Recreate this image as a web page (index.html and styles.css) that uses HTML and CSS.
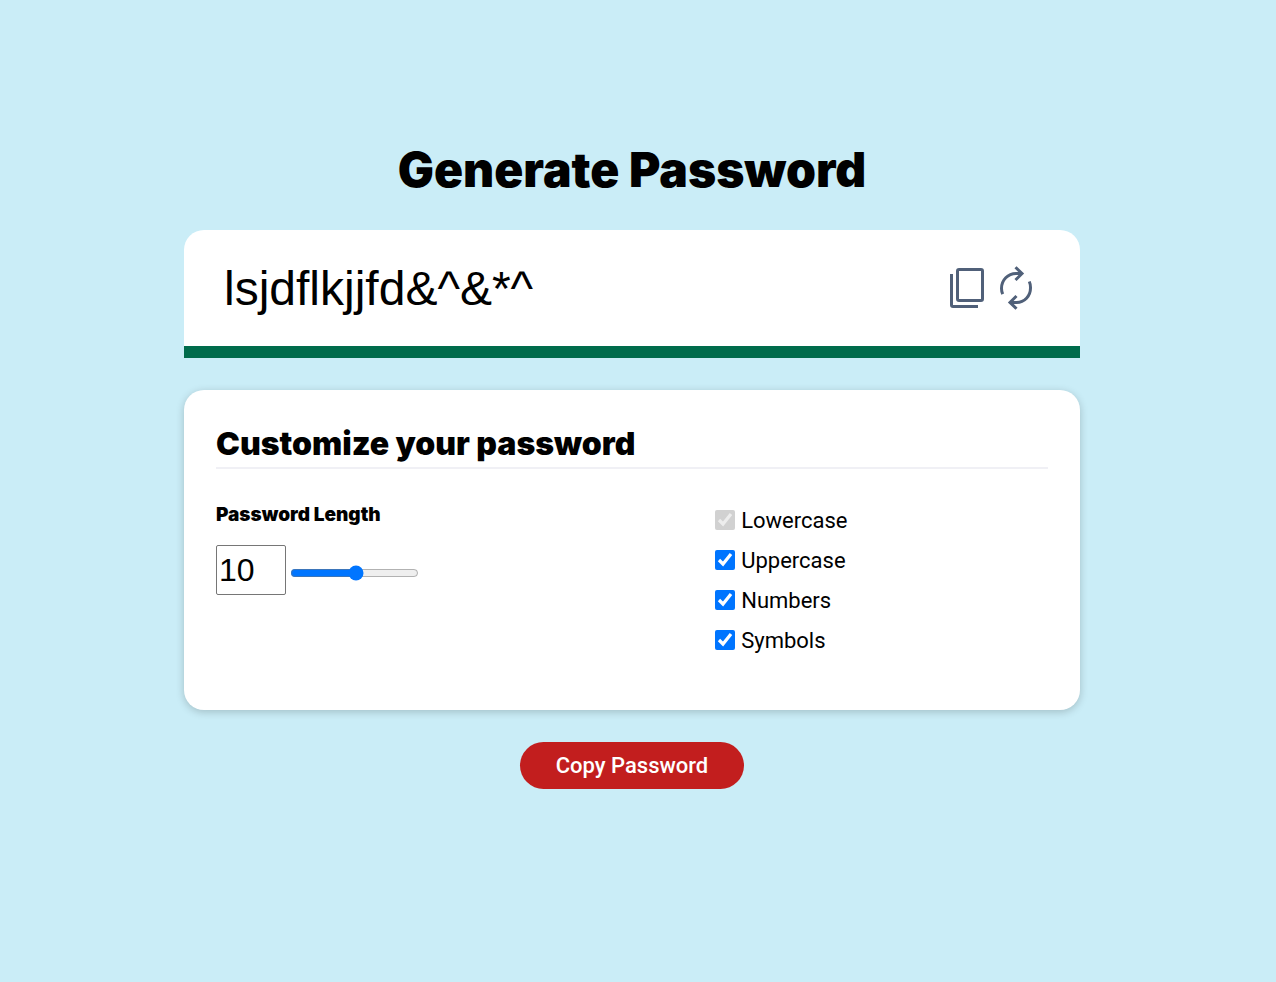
FILE: index.html
```html
<!DOCTYPE html>
<html lang="en">
<head>
<meta charset="utf-8">
<meta name="viewport" content="width=device-width, initial-scale=1">
<title>Generate Password</title>
<link rel="stylesheet" href="styles.css">
</head>
<body>
<main class="page">
  <h1 class="title">Generate Password</h1>

  <section class="result">
    <input class="result-text" type="text" value="lsjdflkjjfd&amp;^&amp;*^" aria-label="Generated password" readonly>
    <div class="actions">
      <button class="icon-button" type="button" aria-label="Copy">
        <svg class="icon" viewBox="0 0 48 48" aria-hidden="true">
          <rect x="13.5" y="5.5" width="25" height="31" rx="1.5"/>
          <path d="M7.500 10V41Q7.500 42.500 9 42.500H34"/>
        </svg>
      </button>
      <button class="icon-button" type="button" aria-label="Regenerate">
        <svg class="icon" viewBox="0 0 48 48" aria-hidden="true">
          <path d="M10.700 30.200A14.500 14.500 0 0 1 9.500 24.500C9.500 16 16 9.500 24 9.500H29"/>
          <path d="M23.500 3.200L30 9.600L23.500 16"/>
          <path d="M37.300 17.500A15 15 0 0 1 38.500 24C38.500 32 32.500 38.500 24.500 38.500H18"/>
          <path d="M24.500 32L18 38.400L24.500 44.800"/>
        </svg>
      </button>
    </div>
  </section>

  <section class="card">
    <h2 class="card-title">Customize your password</h2>
    <div class="settings">
      <div class="length">
        <label class="length-label" for="length">Password Length</label>
        <div class="length-controls">
          <input class="length-number" id="length" type="text" inputmode="numeric" value="10">
          <input class="length-range" type="range" min="0" max="100" value="51" aria-label="Password length slider">
        </div>
      </div>
      <div class="options">
        <label class="option"><input class="check" type="checkbox" checked disabled>Lowercase</label>
        <label class="option"><input class="check" type="checkbox" checked>Uppercase</label>
        <label class="option"><input class="check" type="checkbox" checked>Numbers</label>
        <label class="option"><input class="check" type="checkbox" checked>Symbols</label>
      </div>
    </div>
  </section>

  <button class="copy" type="button">Copy Password</button>
</main>
</body>
</html>
```

FILE: styles.css
```css
* {
  box-sizing: border-box;
}

body {
  margin: 0;
  min-height: 100vh;
  padding: 140px 28px 32px 16px;
  background: #caedf7;
  color: #000;
  font-family: Roboto, "Noto Sans", sans-serif;
}

.page {
  display: flex;
  flex-direction: column;
  align-items: center;
  gap: 32px;
  max-width: 896px;
  margin: 0 auto;
}

.title {
  margin: 0;
  padding-top: 2px;
  font-family: Inter, sans-serif;
  font-size: 48px;
  line-height: 56px;
  font-weight: 900;
  text-align: center;
}

.result {
  display: flex;
  align-items: center;
  justify-content: space-between;
  width: 100%;
  min-height: 128px;
  padding: 0 40px;
  background: #fff;
  border-bottom: 12px solid #006c4c;
  border-radius: 20px 20px 0 0;
}

.result-text {
  flex: 1;
  min-width: 0;
  padding: 0;
  border: 0;
  outline: 0;
  background: transparent;
  color: #000;
  font: 48px "Liberation Sans", Arial, sans-serif;
}

.actions {
  display: flex;
}

.icon-button {
  display: flex;
  padding: 0;
  border: 0;
  background: none;
  cursor: pointer;
}

.icon {
  width: 48px;
  height: 48px;
  fill: none;
  stroke: #506079;
  stroke-width: 3;
}

.card {
  width: 100%;
  min-height: 320px;
  padding: 32px;
  background: #fff;
  border-radius: 20px;
  box-shadow: 0 2px 8px rgba(0, 0, 0, 0.2);
}

.card-title {
  margin: 0;
  padding-top: 1px;
  padding-bottom: 2px;
  border-bottom: 2px solid #f0f0f5;
  font-family: Inter, sans-serif;
  font-size: 32px;
  line-height: 42px;
  font-weight: 900;
}

.settings {
  display: grid;
  grid-template-columns: 3fr 2fr;
  padding-top: 32px;
}

.length-label {
  display: block;
  padding-top: 1px;
  font-family: Inter, sans-serif;
  font-size: 19px;
  line-height: 26px;
  font-weight: 900;
}

.length-controls {
  display: flex;
  align-items: center;
  gap: 4px;
  padding-top: 17px;
}

.length-number {
  width: 70px;
  height: 50px;
  padding: 1px 2px;
  border: 1px solid #767676;
  border-radius: 2px;
  font: 32px "Liberation Sans", Arial, sans-serif;
}

.length-range {
  width: 129px;
  margin: 6px 0 0;
}

.options {
  display: flex;
  flex-direction: column;
}

.option {
  display: flex;
  align-items: center;
  gap: 6px;
  font-size: 22px;
  line-height: 40px;
}

.check {
  width: 20px;
  height: 20px;
  margin: 0 0 2px;
}

.copy {
  width: 224px;
  height: 47px;
  padding: 0;
  border: 0;
  border-radius: 24px;
  background: #c21e1e;
  color: #fff;
  font: 500 22px Roboto, "Noto Sans", sans-serif;
  cursor: pointer;
}
```
